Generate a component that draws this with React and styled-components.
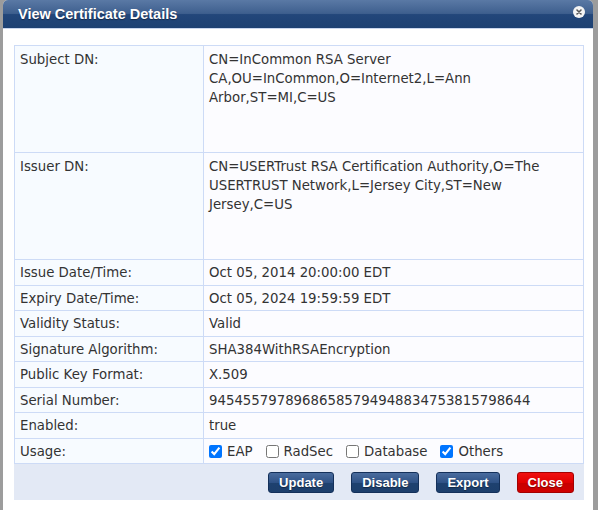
import React from "react";
import styled, { createGlobalStyle } from "styled-components";

const GlobalStyle = createGlobalStyle`
  html, body {
    margin: 0;
    padding: 0;
    background: #9c9c9c;
    overflow: hidden;
  }
`;

const rows = [
  { label: "Subject DN:", value: "CN=InCommon RSA Server CA,OU=InCommon,O=Internet2,L=Ann Arbor,ST=MI,C=US", tall: true },
  { label: "Issuer DN:", value: "CN=USERTrust RSA Certification Authority,O=The USERTRUST Network,L=Jersey City,ST=New Jersey,C=US", tall: true },
  { label: "Issue Date/Time:", value: "Oct 05, 2014 20:00:00 EDT" },
  { label: "Expiry Date/Time:", value: "Oct 05, 2024 19:59:59 EDT" },
  { label: "Validity Status:", value: "Valid" },
  { label: "Signature Algorithm:", value: "SHA384WithRSAEncryption" },
  { label: "Public Key Format:", value: "X.509" },
  { label: "Serial Number:", value: "94545579789686585794948834753815798644" },
  { label: "Enabled:", value: "true" },
];

const usages = [
  { name: "EAP", checked: true },
  { name: "RadSec", checked: false },
  { name: "Database", checked: false },
  { name: "Others", checked: true },
];

function App() {
  return (
    <>
      <GlobalStyle />
      <Dialog>
        <TitleBar>
          <Title>View Certificate Details</Title>
          <CloseIcon>
            <svg width="12" height="12" viewBox="0 0 12 12">
              <circle cx="6" cy="6" r="6" fill="#f4f4f4" />
              <path d="M4 4 L8 8 M8 4 L4 8" stroke="#555" strokeWidth="1.6" strokeLinecap="round" />
            </svg>
          </CloseIcon>
        </TitleBar>
        <Body>
          <Table>
            <tbody>
              {rows.map((r) => (
                <tr key={r.label}>
                  <Label tall={r.tall}>{r.label}</Label>
                  <Value tall={r.tall}>{r.value}</Value>
                </tr>
              ))}
              <tr>
                <Label>Usage:</Label>
                <Value>
                  <Usages>
                    {usages.map((u) => (
                      <Check key={u.name}>
                        <input type="checkbox" defaultChecked={u.checked} />
                        {u.name}
                      </Check>
                    ))}
                  </Usages>
                </Value>
              </tr>
            </tbody>
          </Table>
          <Footer>
            <Button>Update</Button>
            <Button>Disable</Button>
            <Button>Export</Button>
            <Button danger>Close</Button>
          </Footer>
        </Body>
      </Dialog>
    </>
  );
}

export default App;

const Dialog = styled.div`
  margin-left: 3px;
  width: 590px;
  height: 530px;
  background: #fff;
  border-radius: 5px 5px 0 0;
  overflow: hidden;
  font-family: "DejaVu Sans", Verdana, sans-serif;
`;

const TitleBar = styled.div`
  height: 28px;
  display: flex;
  align-items: center;
  justify-content: space-between;
  padding: 0 8px 0 15px;
  background: linear-gradient(#5a79a5 0%, #3e5f8e 48%, #22467a 52%, #1d4173 100%);
  border-bottom: 1px solid #c9d6ee;
`;

const Title = styled.div`
  color: #fff;
  font-family: "Liberation Sans", Arial, sans-serif;
  font-weight: bold;
  font-size: 14.5px;
  text-shadow: 0 1px 1px rgba(0, 0, 0, 0.4);
`;

const CloseIcon = styled.div`
  display: flex;
  margin-top: -4px;
`;

const Body = styled.div`
  padding: 16px 9px 0 11px;
`;

const Table = styled.table`
  width: 100%;
  border-collapse: collapse;
  font-size: 13.3px;
  color: #333;
  td {
    border: 1px solid #cddbf6;
    vertical-align: top;
  }
`;

const Label = styled.td`
  width: 178px;
  padding: ${(p) => (p.tall ? "4px 5px 2px" : "4px 5px 2px")};
  line-height: ${(p) => (p.tall ? "19px" : "18.5px")};
  background: #f7fbff;
  height: ${(p) => (p.tall ? "100px" : "auto")};
`;

const Value = styled.td`
  padding: ${(p) => (p.tall ? "4px 5px 2px" : "4px 5px 2px")};
  line-height: ${(p) => (p.tall ? "19px" : "18.5px")};
  background: #fcfcff;
  height: ${(p) => (p.tall ? "100px" : "auto")};
`;

const Usages = styled.div`
  display: flex;
  gap: 13px;
`;

const Check = styled.label`
  display: flex;
  align-items: center;
  gap: 5px;
  input {
    margin: 0;
    width: 13px;
    height: 13px;
  }
`;

const Footer = styled.div`
  display: flex;
  justify-content: flex-end;
  gap: 17px;
  padding: 8px 10px 7px;
  background: #e3e9f5;
`;

const Button = styled.button`
  height: 21px;
  padding: 0 10px;
  border-radius: 3px;
  border: 1px solid ${(p) => (p.danger ? "#a40000" : "#14305a")};
  background: ${(p) =>
    p.danger
      ? "linear-gradient(#f01010 0%, #e00000 50%, #c80000 52%, #d00000 100%)"
      : "linear-gradient(#4a6c9e 0%, #2f5286 50%, #1e416f 52%, #1d3f6c 100%)"};
  color: #fff;
  font-family: "Liberation Sans", Arial, sans-serif;
  font-weight: bold;
  font-size: 13px;
  text-shadow: 0 1px 1px rgba(0, 0, 0, 0.4);
  cursor: pointer;
`;
